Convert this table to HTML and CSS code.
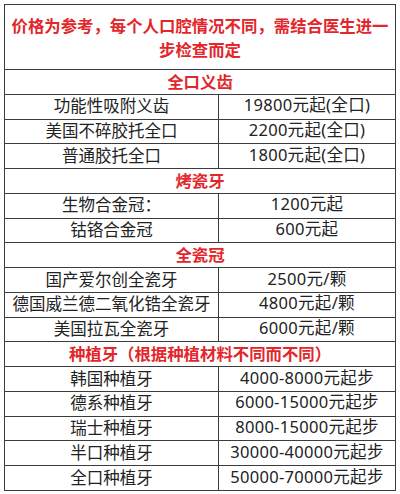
FILE: index.html
```html
<!DOCTYPE html>
<html lang="zh-CN">
<head>
<meta charset="utf-8">
<title>价格参考</title>
<link rel="stylesheet" href="styles.css">
</head>
<body>
<div class="sheet">
  <div class="note">价格为参考，每个人口腔情况不同，需结合医生进一<br>步检查而定</div>

  <div class="sec">全口义齿</div>
  <div class="row"><div class="name">功能性吸附义齿</div><div class="price">19800元起(全口)</div></div>
  <div class="row"><div class="name">美国不碎胶托全口</div><div class="price">2200元起(全口)</div></div>
  <div class="row"><div class="name">普通胶托全口</div><div class="price">1800元起(全口)</div></div>

  <div class="sec">烤瓷牙</div>
  <div class="row"><div class="name">生物合金冠：</div><div class="price">1200元起</div></div>
  <div class="row"><div class="name">钴铬合金冠</div><div class="price">600元起</div></div>

  <div class="sec">全瓷冠</div>
  <div class="row"><div class="name">国产爱尔创全瓷牙</div><div class="price">2500元/颗</div></div>
  <div class="row"><div class="name">德国威兰德二氧化锆全瓷牙</div><div class="price">4800元起/颗</div></div>
  <div class="row"><div class="name">美国拉瓦全瓷牙</div><div class="price">6000元起/颗</div></div>

  <div class="sec">种植牙（根据种植材料不同而不同）</div>
  <div class="row"><div class="name">韩国种植牙</div><div class="price">4000-8000元起步</div></div>
  <div class="row"><div class="name">德系种植牙</div><div class="price">6000-15000元起步</div></div>
  <div class="row"><div class="name">瑞士种植牙</div><div class="price">8000-15000元起步</div></div>
  <div class="row"><div class="name">半口种植牙</div><div class="price">30000-40000元起步</div></div>
  <div class="row"><div class="name">全口种植牙</div><div class="price">50000-70000元起步</div></div>
</div>
</body>
</html>
```

FILE: styles.css
```css
html, body {
  margin: 0;
  padding: 0;
  background: #ffffff;
}

body {
  padding: 4px 0 0 4px;
  font-family: "Noto Sans CJK SC", "Noto Sans CJK JP", sans-serif;
  color: #222222;
}

.sheet {
  width: 392px;
  box-sizing: border-box;
  border: 1px solid #3c3c3c;
  display: flex;
  flex-direction: column;
}

.note {
  height: 64px;
  display: flex;
  align-items: center;
  justify-content: center;
  text-align: center;
  color: #e3262b;
  font-weight: 700;
  font-size: 16.4px;
  line-height: 24px;
}

.sec,
.row {
  height: 24.75px;
  box-sizing: border-box;
  border-top: 1px solid #3c3c3c;
}

.sec {
  display: flex;
  align-items: center;
  justify-content: center;
  color: #e3262b;
  font-weight: 700;
  font-size: 16.4px;
  line-height: 1;
  padding-bottom: 1px;
}

.row {
  display: grid;
  grid-template-columns: 213px 1fr;
}

.name,
.price {
  display: flex;
  align-items: center;
  justify-content: center;
  font-size: 16.5px;
  line-height: 1;
  padding-bottom: 2px;
  white-space: nowrap;
}

.price {
  border-left: 1px solid #3c3c3c;
  font-family: "Noto Sans", "Noto Sans CJK SC", sans-serif;
  letter-spacing: 0.3px;
}
```
